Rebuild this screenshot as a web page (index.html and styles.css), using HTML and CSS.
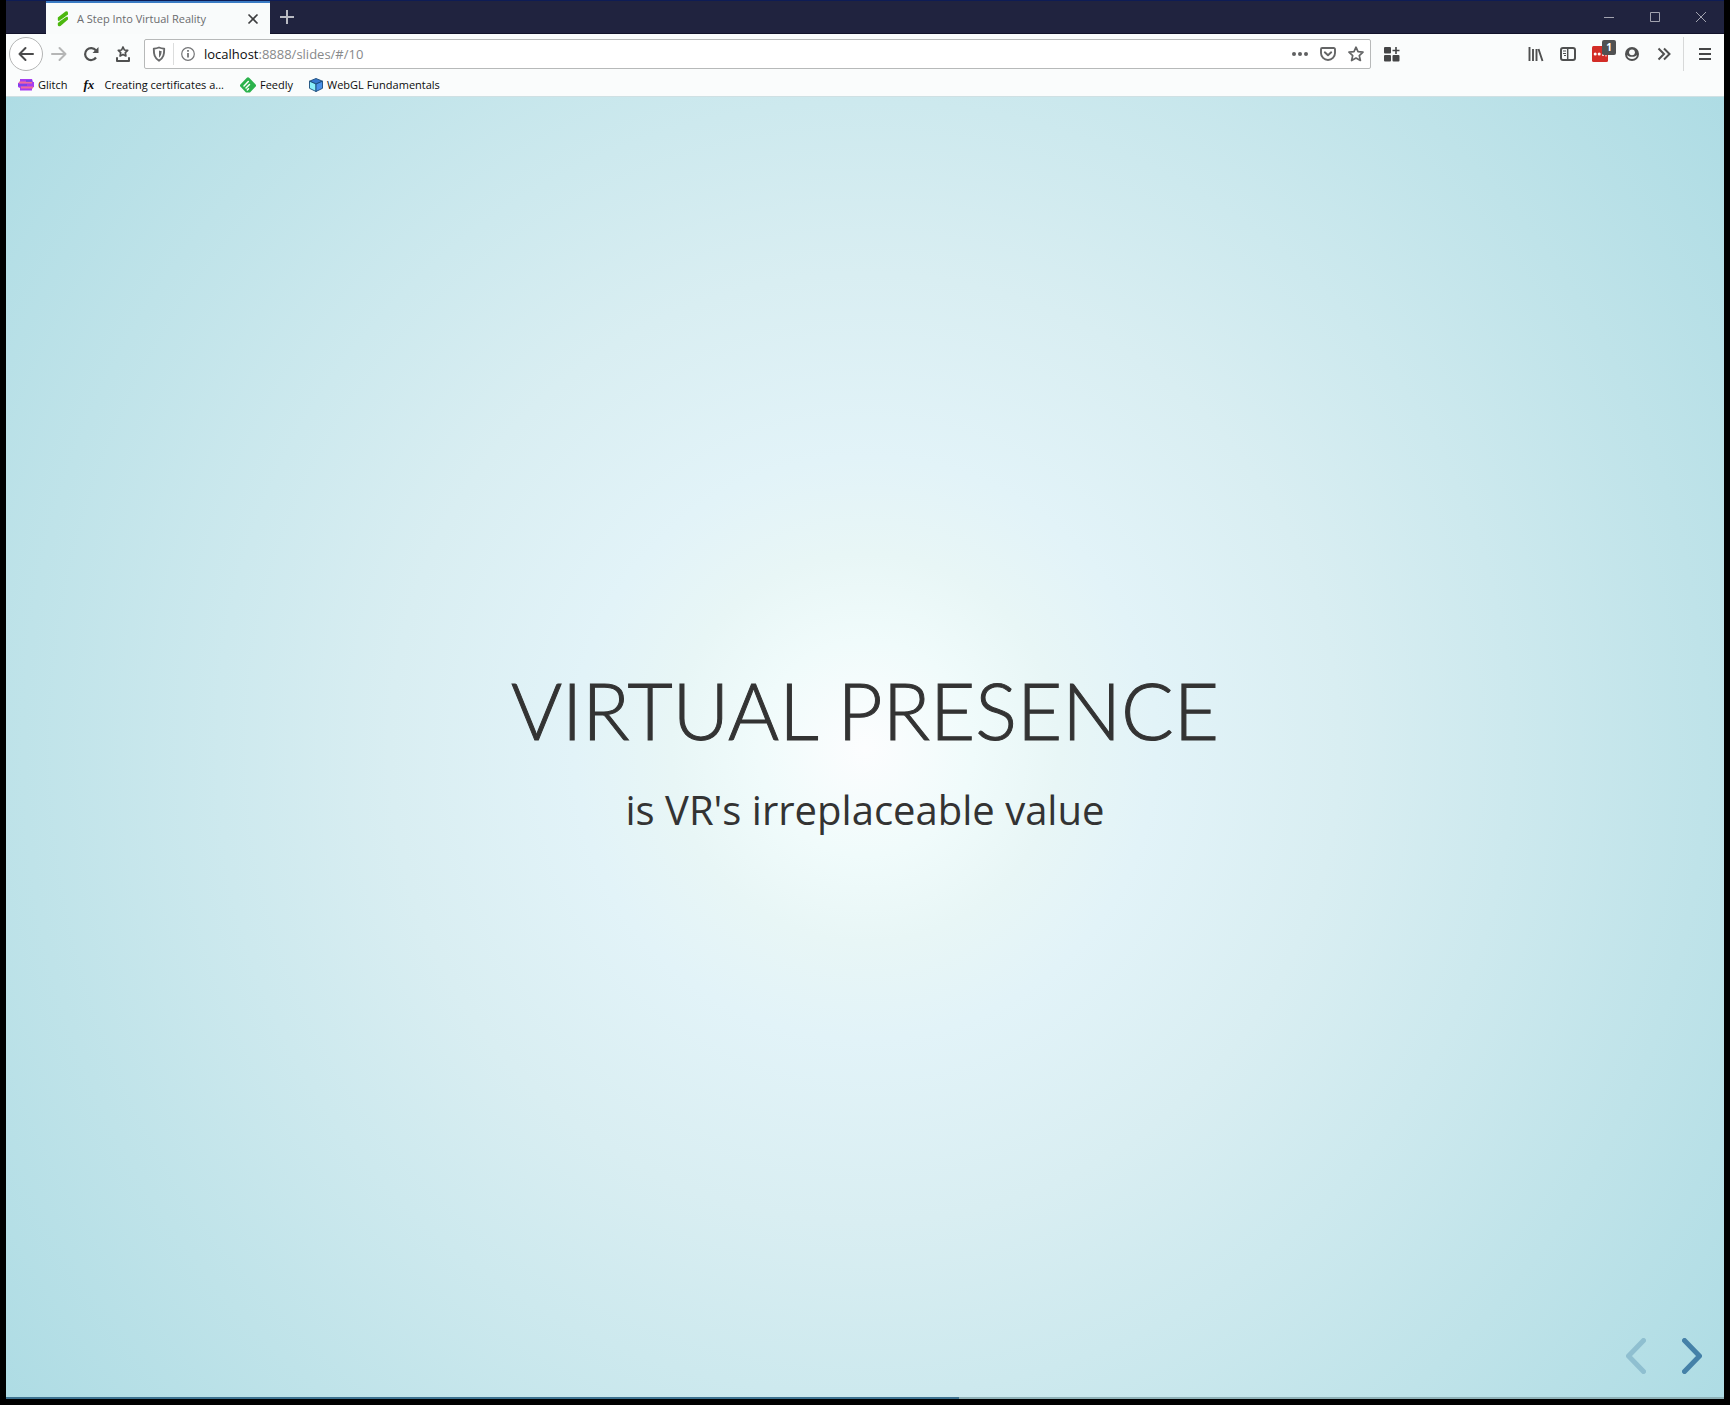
FILE: index.html
```html
<!DOCTYPE html>
<html lang="en">
<head>
<meta charset="utf-8">
<title>A Step Into Virtual Reality</title>
<link rel="stylesheet" href="styles.css">
</head>
<body>
<div class="window">
  <header class="tabbar">
    <div class="tab">
      <svg class="tab-icon" width="16" height="16" viewBox="0 0 16 16" fill="#4cb80f"><path d="M2.800 6.500 10.500.5q2-.8 2.500 1v2L5.500 9.800q-2.500 1-2.700-1z"/><path d="M2.800 12 11 5.600q1.800-.3 2 1v2L5.500 15q-2.500 1-2.700-1z"/><path d="M3.500 10.600 12.600 4.600" stroke="#f9fbfb" stroke-width=".8"/></svg>
      <span class="tab-title">A Step Into Virtual Reality</span>
      <button class="tab-close" aria-label="Close tab"><svg width="12" height="12" viewBox="0 0 12 12" stroke="#3d3d3f" stroke-width="1.600"><path d="M1.500 1.500l9 9M10.500 1.500l-9 9"/></svg></button>
    </div>
    <button class="tab-new" aria-label="New tab"><svg width="14" height="14" viewBox="0 0 14 14" stroke="#b9bac3" stroke-width="2"><path d="M7 0v14M0 7h14"/></svg></button>
    <div class="controls">
      <button class="control" aria-label="Minimize"><svg width="10" height="10" viewBox="0 0 10 10" fill="none" stroke="#a2a3af"><path d="M0 5.500h10"/></svg></button>
      <button class="control" aria-label="Maximize"><svg width="10" height="10" viewBox="0 0 10 10" fill="none" stroke="#a2a3af"><path d="M.5.5h9v9h-9z"/></svg></button>
      <button class="control" aria-label="Close"><svg width="10" height="10" viewBox="0 0 10 10" fill="none" stroke="#a2a3af"><path d="M0 0l10 10M10 0 0 10"/></svg></button>
    </div>
  </header>

  <nav class="toolbar" aria-label="Navigation">
    <button class="tool tool-back" aria-label="Back"><svg width="16" height="16" viewBox="0 0 16 16" fill="none" stroke="#4a4a4b" stroke-width="2" stroke-linecap="round" stroke-linejoin="round"><path d="M15 8H1.500M7.500 2l-6 6 6 6"/></svg></button>
    <button class="tool" aria-label="Forward" disabled><svg width="16" height="16" viewBox="0 0 16 16" fill="none" stroke="#b5b6b6" stroke-width="2" stroke-linecap="round" stroke-linejoin="round"><path d="M1 8h13.500M8.500 2l6 6-6 6"/></svg></button>
    <button class="tool" aria-label="Reload"><svg width="16" height="16" viewBox="0 0 16 16" fill="none" stroke="#4f5050" stroke-width="2.200"><path d="M13 11.500A6 6 0 1 1 12.800 4.300"/><path d="M15.500 1v6H9.500z" fill="#4f5050" stroke="none"/></svg></button>
    <button class="tool" aria-label="Bookmarks menu"><svg width="16" height="18" viewBox="0 0 16 18" fill="none" stroke="#4f5050" stroke-width="1.700" stroke-linejoin="round" stroke-linecap="round"><path d="M8 2l1.400 3 3.300.4-2.400 2.300.6 3.300L8 9.400 5.100 11l.6-3.300L3.300 5.400 6.600 5z"/><path d="M2 13v3h12v-3" stroke-width="2"/></svg></button>

    <form class="address">
      <svg class="shield" width="14" height="16" viewBox="0 0 14 16" fill="none" stroke="#68696a" stroke-width="1.900" stroke-linejoin="round"><path d="M7 1.500c2 .9 3.500 1.100 5.200 1.200 0 5.600-.6 9.300-5.200 12C2.400 12 1.800 8.300 1.800 2.700 3.500 2.600 5 2.400 7 1.500z"/><path d="M7 4.500v7.300c2-1.700 2.500-3.900 2.600-6.700-1 0-1.800-.2-2.600-.6z" fill="#68696a" stroke="none"/></svg>
      <svg class="info" width="14" height="14" viewBox="0 0 14 14" fill="none" stroke="#747577" stroke-width="1.200"><circle cx="7" cy="7" r="6.300"/><path d="M7 6v4.500M7 3v1.700" stroke-width="1.800"/></svg>
      <label class="url" for="url"><span class="host">localhost</span>:8888/slides/#/10</label>
      <input class="url-input" id="url" type="text" aria-label="Address">
      <button type="button" class="page-action" aria-label="Page actions"><svg width="16" height="16" viewBox="0 0 16 16" fill="#5f6061"><circle cx="2" cy="8" r="2"/><circle cx="8" cy="8" r="2"/><circle cx="14" cy="8" r="2"/></svg></button>
      <button type="button" class="page-action" aria-label="Save to Pocket"><svg width="16" height="16" viewBox="0 0 16 16" fill="none" stroke="#646566" stroke-width="1.900" stroke-linejoin="round" stroke-linecap="round"><path d="M2.200 2h11.600a1.200 1.200 0 0 1 1.200 1.200V7A7 7 0 0 1 1 7V3.200A1.200 1.200 0 0 1 2.200 2z"/><path d="M4.800 6.300 8 9.300l3.200-3"/></svg></button>
      <button type="button" class="page-action" aria-label="Bookmark this page"><svg width="16" height="16" viewBox="0 0 16 16" fill="none" stroke="#646566" stroke-width="1.700" stroke-linejoin="round"><path d="M8 1.200l2 4.500 5 .5-3.700 3.400 1.100 4.900L8 12l-4.400 2.500 1.100-4.900L1 6.200l5-.5z"/></svg></button>
    </form>

    <button class="tool tool-ext" aria-label="Extensions"><svg width="16" height="16" viewBox="0 0 16 16" fill="#444546"><rect y="1" width="7" height="6.500" rx="1"/><rect y="9" width="7" height="6.500" rx="1"/><rect x="8.500" y="9" width="7" height="6.500" rx="1"/><path d="M11.200 1h1.600v2.700h2.700v1.600h-2.700V8h-1.600V5.300H8.500V3.700h2.700z"/></svg></button>
    <button class="tool" aria-label="Library"><svg width="16" height="16" viewBox="0 0 16 16" fill="none" stroke="#4f5050" stroke-width="1.900"><path d="M1.500 1v14M5 3v12M8.500 3v12M10.500 3l4 12"/></svg></button>
    <button class="tool" aria-label="Sidebars"><svg width="16" height="16" viewBox="0 0 16 16" fill="none" stroke="#4f5050"><rect x="1" y="2" width="14" height="12" rx="2" stroke-width="2"/><path d="M7.700 2v12" stroke-width="1.500"/><path d="M3 5h3M3 7.500h3M4 9.500h2"/></svg></button>
    <button class="tool tool-badged" aria-label="Password manager"><svg width="16" height="16" viewBox="0 0 16 16"><rect width="16" height="16" rx="1.500" fill="#d32d27"/><g fill="#fff"><circle cx="3.200" cy="8" r="1.500"/><circle cx="7.200" cy="8" r="1.500"/><circle cx="11" cy="9" r="1"/><path d="M13.500 8.500h1v2h-1z"/></g></svg><span class="badge">1</span></button>
    <button class="tool" aria-label="Account"><svg width="16" height="16" viewBox="0 0 16 16"><circle cx="8" cy="8" r="7" fill="#4f5050"/><circle cx="8" cy="6.300" r="2.900" fill="#fafcfc"/><path d="M3 9c1 1.300 3 1.800 5 1.800s4-.5 5-1.800c-.3 2.700-2.500 4-5 4S3.300 11.700 3 9z" fill="#fafcfc"/></svg></button>
    <button class="tool" aria-label="More tools"><svg width="14" height="14" viewBox="0 0 14 14" fill="none" stroke="#4f5050" stroke-width="2"><path d="M1.500 1.500 7 7l-5.500 5.500M7 1.500 12.500 7 7 12.500"/></svg></button>
    <span class="divider"></span>
    <button class="tool" aria-label="Menu"><svg width="12" height="12" viewBox="0 0 12 12" stroke="#454647" stroke-width="2"><path d="M0 1h12M0 6h12M0 11h12"/></svg></button>
  </nav>

  <nav class="bookmarks" aria-label="Bookmarks">
    <a class="bookmark" href="#"><svg width="16" height="12" viewBox="0 0 16 12"><path d="M2 0h12l1 3h1v5l-2 1v2.500H2V9L0 8V4l2-1z" fill="#a63df0"/><path d="M1 3.500h13M3 8.500h12" stroke="#f06a9b" stroke-width="2"/><path d="M0 6h9M8 2h6" stroke="#6a48e8" stroke-width="1.500"/></svg>Glitch</a>
    <a class="bookmark" href="#"><span class="fx">fx</span>Creating certificates a...</a>
    <a class="bookmark" href="#"><svg width="16" height="16" viewBox="0 0 16 16"><path d="M6.600 1a2 2 0 0 1 2.800 0l6 6.200a1.800 1.800 0 0 1 0 2.600L10 15.400H6L.6 9.800a1.800 1.800 0 0 1 0-2.600z" fill="#2bb24c"/><path d="M4 9l4.300-4.500M6 11l3.500-3.500M7.300 13l1.200-1.200" stroke="#fff" stroke-width="1.500" stroke-linecap="round"/></svg>Feedly</a>
    <a class="bookmark" href="#"><svg width="14" height="14" viewBox="0 0 14 14" stroke="#174a79" stroke-width=".9" stroke-linejoin="round"><path d="M7 .5l6.500 2.700L7 6 .5 3.200z" fill="#3578ce"/><path d="M.5 3.200 7 6v7.500L.5 10.300z" fill="#8af0fa"/><path d="M13.500 3.200 7 6v7.500l6.500-3.200z" fill="#4a91e8"/></svg>WebGL Fundamentals</a>
  </nav>

  <main class="slide">
    <section class="content">
      <h1 class="title">VIRTUAL PRESENCE</h1>
      <p class="subtitle">is VR's irreplaceable value</p>
    </section>
    <div class="arrows">
      <button class="arrow" aria-label="Previous slide" disabled><svg width="20" height="36" viewBox="0 0 20 36" fill="none" stroke="#8fbfd0" stroke-width="5" stroke-linecap="round" stroke-linejoin="round"><path d="M17.500 2.500 2.500 18l15 15.500"/></svg></button>
      <button class="arrow" aria-label="Next slide"><svg width="20" height="36" viewBox="0 0 20 36" fill="none" stroke="#4581a8" stroke-width="5" stroke-linecap="round" stroke-linejoin="round"><path d="M2.500 2.500l15 15.500-15 15.500"/></svg></button>
    </div>
    <div class="progress"><div class="progress-fill" style="width: 55.5%"></div></div>
  </main>
</div>
</body>
</html>
```
FILE: styles.css
```css
* { box-sizing: border-box; }

body {
  margin: 0;
  background: #000;
  font-family: "Open Sans", "Noto Sans", sans-serif;
}

button {
  padding: 0;
  border: 0;
  background: none;
  font: inherit;
}

svg { display: block; flex: none; }

.window {
  display: flex;
  flex-direction: column;
  min-height: 100vh;
  padding: 0 6px 6px;
}

/* Tab strip */
.tabbar {
  display: flex;
  height: 34px;
  padding-left: 40px;
  background: #20233f;
  border-top: 1px solid #0e1c55;
  border-bottom: 1px solid #12132b;
}

.tab {
  display: flex;
  align-items: center;
  width: 224px;
  height: 33px;
  padding: 0 11px 0 9px;
  background: #f9fbfb;
  border-top: 2px solid #3a7bc4;
}

.tab-icon { margin-right: 6px; }

.tab-title {
  flex: 1;
  color: #6b6c6e;
  font-size: 11px;
  line-height: 16px;
  white-space: nowrap;
}

.tab-new {
  display: grid;
  place-items: center;
  width: 34px;
}

.controls { display: flex; margin-left: auto; }

.control {
  display: grid;
  place-items: center;
  width: 46px;
}

/* Navigation toolbar */
.toolbar {
  display: flex;
  align-items: center;
  height: 40px;
  padding: 0 3px;
  background: #fafcfc;
}

.tool {
  display: grid;
  flex: none;
  place-items: center;
  width: 32px;
  height: 32px;
}

.tool-back {
  width: 34px;
  height: 34px;
  border: 1px solid #b4b5b5;
  border-radius: 50%;
  background: #fff;
}

.tool-ext { margin-right: 112px; }

.tool-badged { position: relative; }

.badge {
  position: absolute;
  top: 2px;
  right: 0;
  width: 14px;
  height: 15px;
  border-radius: 2px;
  background: #505152;
  color: #fff;
  font-size: 10px;
  font-weight: 700;
  line-height: 15px;
  text-align: center;
}

.divider {
  width: 1px;
  height: 34px;
  margin: 0 5px 0 3px;
  background: #d7d9d9;
}

.address {
  display: flex;
  flex: 1;
  align-items: center;
  height: 30px;
  margin: 0 5px;
  padding-left: 7px;
  border: 1px solid #b7b9b9;
  border-radius: 2px;
  background: #fff;
}

.shield { margin-right: 7px; }

.info {
  box-sizing: content-box;
  padding: 4px 9px 4px 7px;
  border-left: 1px solid #dcdddd;
}

.url {
  color: #87898a;
  font-size: 13px;
  line-height: 20px;
  white-space: nowrap;
}

.host { color: #0c0c0d; }

.url-input {
  flex: 1;
  min-width: 0;
  height: 24px;
  padding: 0;
  border: 0;
  background: none;
  font-size: 13px;
}

.page-action {
  display: grid;
  place-items: center;
  width: 28px;
  height: 28px;
}

/* Bookmarks toolbar */
.bookmarks {
  display: flex;
  gap: 16px;
  height: 23px;
  padding: 0 12px;
  background: #fafcfc;
  border-bottom: 1px solid #cfe0e3;
}

.bookmark {
  display: flex;
  gap: 4px;
  align-items: center;
  color: #0c0c0d;
  font-size: 11px;
  line-height: 16px;
  text-decoration: none;
  white-space: nowrap;
}

.fx {
  width: 17px;
  font-family: "Liberation Serif", serif;
  font-size: 13px;
  font-style: italic;
  font-weight: 700;
}

/* Presentation slide */
.slide {
  position: relative;
  display: grid;
  flex: 1;
  place-items: center;
  background: radial-gradient(circle, #fcfdfe 0%, #f0fbfb 10%, #e8f6f6 18%, #e2f3f8 27%, #d9eef2 44%, #cde9ee 60%, #bfe3e9 78%, #aedce4 100%);
}

.content {
  color: #333;
  text-align: center;
}

.title {
  margin: 0 0 24px;
  font-family: Lato, sans-serif;
  font-size: 78px;
  font-weight: 300;
  line-height: 100px;
  -webkit-text-stroke: 1px #333;
}

.subtitle {
  margin: 0;
  font-size: 40px;
  line-height: 52px;
}

.arrows {
  position: absolute;
  right: 22px;
  bottom: 25px;
  display: flex;
  gap: 36px;
}

.progress {
  position: absolute;
  right: 0;
  bottom: 0;
  left: 0;
  height: 2px;
  background: #8eb0b6;
}

.progress-fill {
  height: 2px;
  background: #3c718f;
}
```
